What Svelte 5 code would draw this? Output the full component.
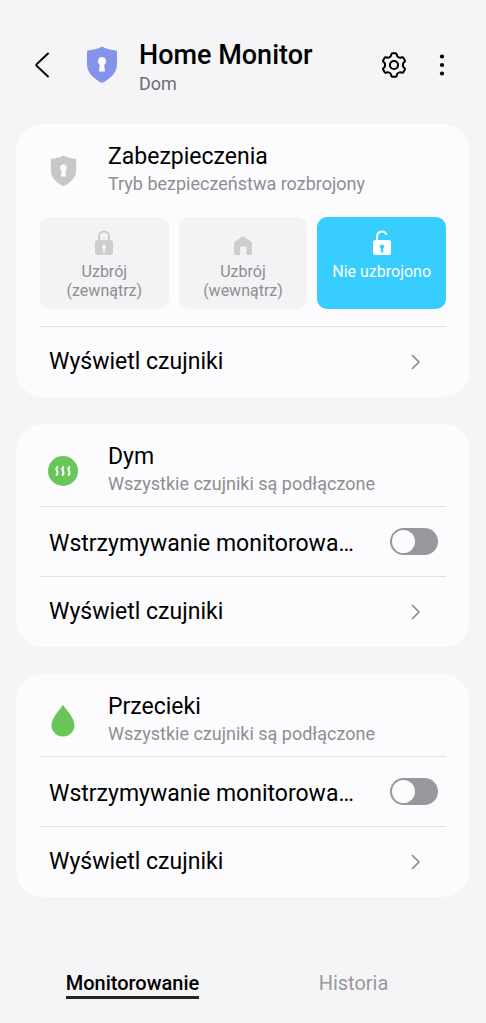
<script lang="ts">
  interface Section {
    id: string;
    title: string;
    status: string;
    paused: boolean;
  }

  const modes = [
    { id: 'away', lines: ['Uzbrój', '(zewnątrz)'] },
    { id: 'stay', lines: ['Uzbrój', '(wewnątrz)'] },
    { id: 'disarmed', lines: ['Nie uzbrojono'] }
  ];

  const tabs = [
    { id: 'monitor', label: 'Monitorowanie' },
    { id: 'history', label: 'Historia' }
  ];

  let mode = $state('disarmed');
  let tab = $state('monitor');
  let sections = $state<Section[]>([
    { id: 'smoke', title: 'Dym', status: 'Wszystkie czujniki są podłączone', paused: false },
    { id: 'leak', title: 'Przecieki', status: 'Wszystkie czujniki są podłączone', paused: false }
  ]);
</script>

{#snippet shield()}
  <path d="M16 .5c4.5 2.6 9.500 3.500 14 4a1.500 1.500 0 0 1 1 1.500V18c0 9-7 15-15 19C8 33 1 27 1 18V6a1.500 1.500 0 0 1 1-1.500C6.500 4 11.500 3.100 16 .5z" fill="currentColor" />
  <path d="M16 11a4.200 4.200 0 0 1 2.200 7.700l.8 6.800h-6l.8-6.800A4.200 4.200 0 0 1 16 11z" fill="#fcfcfe" />
{/snippet}

{#snippet keyhole()}
  <path class="hole" d="M11 14.500a2.200 2.200 0 0 1 1.200 4.100V22.500H9.800v-3.900a2.200 2.200 0 0 1 1.200-4.100z" />
{/snippet}

{#snippet sensorsRow()}
  <a class="row" href="#sensors">
    <span class="row-label">Wyświetl czujniki</span>
    <svg class="chevron" viewBox="0 0 10 16" aria-hidden="true">
      <path d="M1.500 1.500L8 8l-6.500 6.500" fill="none" stroke="#8a8a8e" stroke-width="1.700" stroke-linecap="round" stroke-linejoin="round" />
    </svg>
  </a>
{/snippet}

<div class="app">
  <header class="topbar">
    <button class="icon-btn back" aria-label="Wstecz">
      <svg width="16" height="28" viewBox="0 0 16 28" aria-hidden="true">
        <path d="M14 2.500L2.600 13.200a1.100 1.100 0 0 0 0 1.600L14 25.500" fill="none" stroke="#000" stroke-width="1.900" stroke-linecap="round" />
      </svg>
    </button>
    <svg class="logo" viewBox="0 0 32 38" aria-hidden="true">{@render shield()}</svg>
    <div class="heading">
      <h1>Home Monitor</h1>
      <p>Dom</p>
    </div>
    <button class="icon-btn" aria-label="Ustawienia">
      <svg width="26" height="26" viewBox="0 0 26 26" fill="none" stroke="#000" stroke-width="2" stroke-linejoin="round" aria-hidden="true">
        <path d="M11.400 1.300h3.200q.8 0 1 .8l.5 1.700q.2.700.8 1l1.200.7q.6.400 1.300.2l1.700-.5q.8-.2 1.200.5l1.600 2.800q.4.700-.2 1.200l-1.200 1.200q-.5.500-.5 1.200v1.800q0 .7.500 1.200l1.200 1.200q.6.500.2 1.200l-1.600 2.800q-.4.700-1.200.5l-1.700-.5q-.7-.2-1.300.2l-1.200.7q-.6.300-.8 1l-.5 1.700q-.2.800-1 .8h-3.200q-.8 0-1-.8l-.5-1.700q-.2-.7-.8-1l-1.200-.7q-.6-.4-1.300-.2l-1.700.5q-.8.200-1.200-.5l-1.600-2.800q-.4-.7.2-1.200l1.200-1.200q.5-.5.5-1.200v-1.800q0-.7-.5-1.200l-1.200-1.200q-.6-.5-.2-1.200l1.600-2.800q.4-.7 1.200-.5l1.700.5q.7.200 1.300-.2l1.200-.7q.6-.3.800-1l.5-1.700q.2-.8 1-.8z" />
        <circle cx="13" cy="13" r="4.100" />
      </svg>
    </button>
    <button class="icon-btn" aria-label="Więcej opcji">
      <svg width="6" height="24" viewBox="0 0 6 24" aria-hidden="true">
        <circle cx="3" cy="3.500" r="2.100" />
        <circle cx="3" cy="12" r="2.100" />
        <circle cx="3" cy="20.500" r="2.100" />
      </svg>
    </button>
  </header>

  <main class="cards">
    <section class="card">
      <div class="card-head">
        <div class="card-icon muted">
          <svg width="27" height="32" viewBox="0 0 32 38" aria-hidden="true">{@render shield()}</svg>
        </div>
        <div>
          <h2>Zabezpieczenia</h2>
          <p>Tryb bezpieczeństwa rozbrojony</p>
        </div>
      </div>
      <div class="modes">
        {#each modes as m (m.id)}
          <button class="mode" class:active={mode === m.id} aria-pressed={mode === m.id} onclick={() => (mode = m.id)}>
            <svg width="22" height="26" viewBox="0 0 22 26" aria-hidden="true">
              {#if m.id === 'away'}
                <path d="M6 12V6.500a5 5 0 0 1 10 0V12" fill="none" stroke="currentColor" stroke-width="2" />
                <rect x="2" y="10" width="18" height="15" rx="2.500" fill="currentColor" />
                {@render keyhole()}
              {:else if m.id === 'stay'}
                <path d="M9.800 6.800a2 2 0 0 1 2.400 0l6.600 4.800a3 3 0 0 1 1.200 2.400v9a2 2 0 0 1-2 2h-3.500v-7a1.500 1.500 0 0 0-1.500-1.500H9.500A1.500 1.500 0 0 0 8 18v7H4a2 2 0 0 1-2-2v-9a3 3 0 0 1 1.200-2.400z" fill="currentColor" />
              {:else}
                <path d="M6 12V6.500a5 5 0 0 1 9.300-2.500" fill="none" stroke="currentColor" stroke-width="2" stroke-linecap="round" />
                <rect x="2" y="10" width="18" height="15" rx="2.500" fill="currentColor" />
                {@render keyhole()}
              {/if}
            </svg>
            {#each m.lines as line}
              <span>{line}</span>
            {/each}
          </button>
        {/each}
      </div>
      {@render sensorsRow()}
    </section>

    {#each sections as section (section.id)}
      <section class="card">
        <div class="card-head">
          <div class="card-icon good">
            {#if section.id === 'smoke'}
              <svg width="30" height="30" viewBox="0 0 30 30" aria-hidden="true">
                <circle cx="15" cy="15" r="15" fill="currentColor" />
                <g fill="none" stroke="#fff" stroke-width="2" stroke-linecap="round" stroke-linejoin="round">
                  <path d="M9.200 11c-1.300 1.600-.9 2.700-.2 3.900s1 2.400-.4 4" />
                  <path d="M15.200 11c-1.300 1.600-.9 2.700-.2 3.900s1 2.400-.4 4" />
                  <path d="M21.200 11c-1.300 1.600-.9 2.700-.2 3.900s1 2.400-.4 4" />
                </g>
              </svg>
            {:else}
              <svg width="24" height="32" viewBox="0 0 24 32" aria-hidden="true">
                <path d="M12 0C15 4.500 23.500 12.500 23.500 20.500a11.500 11 0 0 1-23 0C.5 12.500 9 4.500 12 0z" fill="currentColor" />
              </svg>
            {/if}
          </div>
          <div>
            <h2>{section.title}</h2>
            <p>{section.status}</p>
          </div>
        </div>
        <label class="row">
          <span class="row-label">Wstrzymywanie monitorowa…</span>
          <input class="switch" type="checkbox" role="switch" bind:checked={section.paused} />
        </label>
        {@render sensorsRow()}
      </section>
    {/each}
  </main>

  <nav class="tabs">
    {#each tabs as t (t.id)}
      <button class="tab" class:selected={tab === t.id} onclick={() => (tab = t.id)}>
        <span>{t.label}</span>
      </button>
    {/each}
  </nav>
</div>

<style>
  :global(body) {
    background: #f5f5f8;
  }

  .app {
    display: flex;
    flex-direction: column;
    min-height: 100vh;
    box-sizing: border-box;
    padding: 33px 16px 15px;
    font-family: Roboto, sans-serif;
    color: #000;
  }

  h1, h2, p {
    margin: 0;
  }

  button {
    font: inherit;
    border: none;
    background: none;
    padding: 0;
    cursor: pointer;
  }

  .topbar {
    display: flex;
    align-items: center;
    height: 64px;
    margin-bottom: 27px;
    padding-right: 4px;
  }

  .icon-btn {
    display: flex;
    align-items: center;
    justify-content: center;
    flex-shrink: 0;
    width: 48px;
    height: 48px;
  }

  .back {
    margin: 0 20px 0 2px;
  }

  .logo {
    width: 32px;
    height: 38px;
    flex-shrink: 0;
    color: #8494ea;
  }

  .heading {
    flex: 1;
    min-width: 0;
    margin-left: 21px;
    padding-top: 4px;
  }

  h1 {
    font-size: 27px;
    line-height: 34px;
    font-weight: 500;
  }

  .heading p {
    font-size: 18px;
    line-height: 24px;
    color: #6f6f73;
  }

  .cards {
    display: flex;
    flex-direction: column;
    gap: 27px;
  }

  .card {
    padding: 0 24px 1px;
    border-radius: 27px;
    background: #fcfcfe;
  }

  .card-head {
    display: flex;
    align-items: center;
    height: 82px;
    padding: 8px 0 0 8px;
    box-sizing: border-box;
  }

  .card-icon {
    display: flex;
    align-items: center;
    justify-content: center;
    width: 30px;
    margin-right: 30px;
    padding-top: 4px;
  }

  .muted {
    color: #c8c8ca;
  }

  .good {
    color: #68c757;
  }

  h2 {
    font-size: 23px;
    line-height: 30px;
    font-weight: 400;
  }

  .card-head p {
    font-size: 18px;
    line-height: 24px;
    color: #8e8e93;
  }

  .modes {
    display: grid;
    grid-template-columns: repeat(3, 1fr);
    gap: 10px;
    padding: 11px 0 17px;
  }

  .mode {
    display: flex;
    flex-direction: column;
    align-items: center;
    height: 92px;
    padding-top: 13px;
    border-radius: 10px;
    background: #f3f3f5;
    color: #8e8e93;
    font-size: 16px;
    line-height: 19px;
  }

  .mode svg {
    margin-bottom: 6px;
    color: #cdcdcf;
  }

  .hole {
    fill: #f3f3f5;
  }

  .mode.active {
    background: #38cdff;
    color: #fff;
  }

  .mode.active svg {
    color: #fff;
  }

  .mode.active .hole {
    fill: #38cdff;
  }

  .row {
    display: flex;
    align-items: center;
    justify-content: space-between;
    height: 70px;
    padding: 0 8px 0 9px;
    box-sizing: border-box;
    border-top: 1px solid #e0e0e3;
    color: inherit;
    text-decoration: none;
    cursor: pointer;
  }

  .row-label {
    font-size: 23px;
    line-height: 30px;
    white-space: nowrap;
    overflow: hidden;
    text-overflow: ellipsis;
  }

  label .row-label {
    padding-top: 4px;
  }

  .chevron {
    width: 10px;
    height: 16px;
    margin-right: 17px;
  }

  .switch {
    appearance: none;
    display: flex;
    flex-shrink: 0;
    width: 48px;
    height: 27px;
    margin: 0;
    padding: 2px;
    box-sizing: border-box;
    border-radius: 14px;
    background: #98979c;
    cursor: pointer;
  }

  .switch::before {
    content: '';
    width: 23px;
    height: 23px;
    border-radius: 50%;
    background: #fcfcfe;
  }

  .switch:checked {
    justify-content: flex-end;
    background: #38cdff;
  }

  .tabs {
    display: grid;
    grid-template-columns: 1fr 1fr;
    margin-top: auto;
    padding: 0 6px;
  }

  .tab {
    height: 48px;
    font-size: 20px;
    line-height: 26px;
    color: #98989d;
  }

  .tab span {
    display: inline-block;
    border-bottom: 3px solid transparent;
  }

  .selected {
    color: #000;
    font-weight: 500;
  }

  .selected span {
    border-color: #252528;
  }
</style>
